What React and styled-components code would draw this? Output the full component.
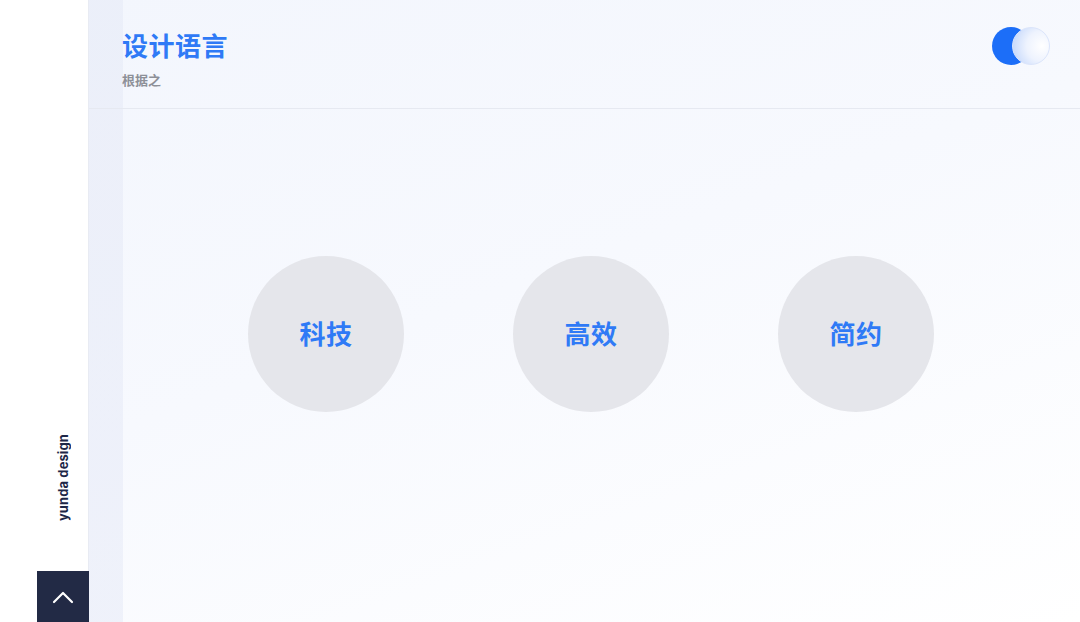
import React from "react";
import styled, { createGlobalStyle } from "styled-components";

const GlobalStyle = createGlobalStyle`
  html, body, #root {
    margin: 0;
    padding: 0;
    height: 100%;
  }
  body {
    font-family: "Noto Sans CJK SC", "Noto Sans", sans-serif;
    background: #ffffff;
  }
`;

const values = ["科技", "高效", "简约"];

export default function App() {
  return (
    <>
      <GlobalStyle />
      <Page>
        <Sidebar>
          <Brand>yunda design</Brand>
          <TopButton aria-label="back to top">
            <svg width="22" height="14" viewBox="0 0 22 14" fill="none">
              <path
                d="M2 12L11 3L20 12"
                stroke="#ffffff"
                strokeWidth="2.2"
                strokeLinecap="round"
                strokeLinejoin="round"
              />
            </svg>
          </TopButton>
        </Sidebar>
        <Main>
          <Header>
            <TitleBlock>
              <Title>设计语言</Title>
              <Subtitle>根据之</Subtitle>
            </TitleBlock>
            <Toggle>
              <Dot />
              <Bubble />
            </Toggle>
          </Header>
          <CircleRow>
            {values.map((v) => (
              <Circle key={v}>{v}</Circle>
            ))}
          </CircleRow>
        </Main>
      </Page>
    </>
  );
}

const Page = styled.div`
  display: flex;
  width: 1080px;
  height: 622px;
  overflow: hidden;
`;

const Sidebar = styled.aside`
  width: 88px;
  flex: none;
  display: flex;
  flex-direction: column;
  align-items: flex-end;
  justify-content: flex-end;
  border-right: 1px solid #e8ebf3;
  background: #ffffff;
`;

const Brand = styled.div`
  writing-mode: vertical-rl;
  transform: rotate(180deg);
  font-family: Inter, "Noto Sans", sans-serif;
  font-weight: 700;
  font-size: 13px;
  letter-spacing: 0.1px;
  color: #1d2747;
  margin-right: 17px;
  margin-bottom: 50px;
`;

const TopButton = styled.button`
  width: 52px;
  height: 51px;
  margin-right: -1px;
  border: none;
  padding: 0;
  background: #222a45;
  display: flex;
  align-items: center;
  justify-content: center;
  cursor: pointer;
`;

const Main = styled.main`
  flex: 1;
  display: flex;
  flex-direction: column;
  background:
    linear-gradient(to right, rgba(228, 232, 246, 0.5) 34px, transparent 34px),
    linear-gradient(160deg, #f3f6fd 0%, #f7f9fe 45%, #ffffff 100%);
`;

const Header = styled.header`
  height: 108px;
  flex: none;
  display: flex;
  align-items: flex-start;
  justify-content: space-between;
  padding: 0 30px 0 33px;
  border-bottom: 1px solid #e6e9f1;
`;

const TitleBlock = styled.div`
  display: flex;
  flex-direction: column;
  padding-top: 27px;
`;

const Title = styled.h1`
  margin: 0;
  font-size: 26px;
  line-height: 36px;
  font-weight: 600;
  color: #2f7af6;
  letter-spacing: 0.5px;
`;

const Subtitle = styled.div`
  margin-top: 8px;
  font-size: 13px;
  line-height: 18px;
  font-weight: 700;
  color: #8d9098;
`;

const Toggle = styled.div`
  display: flex;
  margin-top: 27px;
`;

const Dot = styled.div`
  width: 38px;
  height: 38px;
  border-radius: 50%;
  background: #1c6ef8;
`;

const Bubble = styled.div`
  width: 36px;
  height: 36px;
  margin-left: -18px;
  border-radius: 50%;
  border: 1px solid #dbe5fb;
  background: radial-gradient(circle at 80% 50%, #ffffff 0%, #eef3fe 45%, #bcd2fb 100%);
`;

const CircleRow = styled.div`
  display: flex;
  gap: 109px;
  padding: 147px 0 0 159px;
`;

const Circle = styled.div`
  width: 156px;
  height: 156px;
  border-radius: 50%;
  background: #e5e6eb;
  display: flex;
  align-items: center;
  justify-content: center;
  padding-bottom: 4px;
  box-sizing: border-box;
  font-size: 26px;
  font-weight: 600;
  color: #2f7af6;
  letter-spacing: 0.5px;
`;
